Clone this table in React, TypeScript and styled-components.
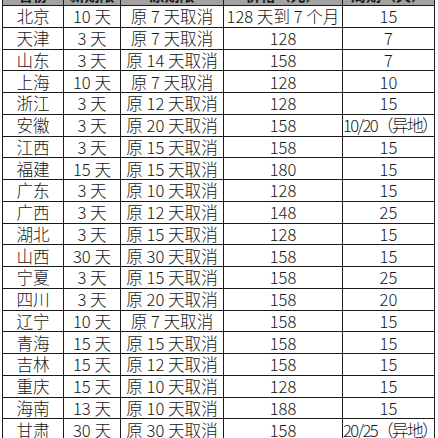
import React from "react";
import styled, { createGlobalStyle } from "styled-components";

const GlobalStyle = createGlobalStyle`
  html, body {
    margin: 0;
    padding: 0;
    background: #ffffff;
  }
  body {
    font-family: "Noto Sans CJK SC", "Noto Sans", sans-serif;
    color: #161616;
  }
`;

const Viewport = styled.div`
  width: 438px;
  height: 438px;
  overflow: hidden;
  padding-left: 2px;
  box-sizing: border-box;
`;

const Sheet = styled.table`
  border-collapse: collapse;
  table-layout: fixed;
  width: 433px;
  margin-top: -17px;
  font-size: 16.6px;
  font-weight: 300;
`;

const HeadCell = styled.th`
  height: 21px;
  padding: 0;
  border: 1px solid #1a1a1a;
  background: #a2a2a2;
  font-weight: bold;
  font-size: 15px;
  line-height: 21px;
  color: #1a1a1a;
  text-align: center;
  white-space: nowrap;
  overflow: hidden;
`;

const Cell = styled.td<{ $tight?: boolean }>`
  height: 20.75px;
  padding: 0;
  border: 1px solid #1a1a1a;
  text-align: center;
  vertical-align: middle;
  line-height: 20px;
  white-space: nowrap;
  overflow: visible;
  letter-spacing: ${(p) => (p.$tight ? "-1.6px" : "0")};
`;

const widths = [61, 57, 103, 119, 92];
const heads = ["省份", "新期限", "原期限", "价格（元）", "周期（天）"];

const rows: string[][] = [
  ["北京", "10 天", "原 7 天取消", "128 天到 7 个月", "15"],
  ["天津", "3 天", "原 7 天取消", "128", "7"],
  ["山东", "3 天", "原 14 天取消", "158", "7"],
  ["上海", "10 天", "原 7 天取消", "128", "10"],
  ["浙江", "3 天", "原 12 天取消", "128", "15"],
  ["安徽", "3 天", "原 20 天取消", "158", "10/20（异地）"],
  ["江西", "3 天", "原 15 天取消", "158", "15"],
  ["福建", "15 天", "原 15 天取消", "180", "15"],
  ["广东", "3 天", "原 10 天取消", "128", "15"],
  ["广西", "3 天", "原 12 天取消", "148", "25"],
  ["湖北", "3 天", "原 15 天取消", "128", "15"],
  ["山西", "30 天", "原 30 天取消", "158", "15"],
  ["宁夏", "3 天", "原 15 天取消", "158", "25"],
  ["四川", "3 天", "原 20 天取消", "158", "20"],
  ["辽宁", "10 天", "原 7 天取消", "158", "15"],
  ["青海", "15 天", "原 15 天取消", "158", "15"],
  ["吉林", "15 天", "原 12 天取消", "158", "15"],
  ["重庆", "15 天", "原 10 天取消", "128", "15"],
  ["海南", "13 天", "原 10 天取消", "188", "15"],
  ["甘肃", "30 天", "原 30 天取消", "158", "20/25（异地）"],
];

export default function App() {
  return (
    <>
      <GlobalStyle />
      <Viewport>
        <Sheet>
          <colgroup>
            {widths.map((w, i) => (
              <col key={i} style={{ width: w }} />
            ))}
          </colgroup>
          <thead>
            <tr>
              {heads.map((h) => (
                <HeadCell key={h}>{h}</HeadCell>
              ))}
            </tr>
          </thead>
          <tbody>
            {rows.map((r) => (
              <tr key={r[0]}>
                {r.map((c, i) => (
                  <Cell key={i} $tight={c.length > 6 && i === 4}>
                    {c}
                  </Cell>
                ))}
              </tr>
            ))}
          </tbody>
        </Sheet>
      </Viewport>
    </>
  );
}
